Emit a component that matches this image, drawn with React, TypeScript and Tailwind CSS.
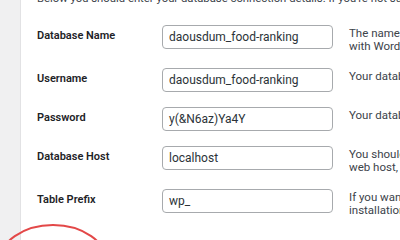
import React from "react";

const rows = [
  { label: "Database Name", value: "daousdum_food-ranking", desc: ["The name of the database you want to use", "with WordPress."] },
  { label: "Username", value: "daousdum_food-ranking", desc: ["Your database username."] },
  { label: "Password", value: "y(&N6az)Ya4Y", desc: ["Your database password."] },
  { label: "Database Host", value: "localhost", desc: ["You should be able to get this info from your", "web host, if localhost does not work."] },
  { label: "Table Prefix", value: "wp_", desc: ["If you want to run multiple WordPress", "installations in a single database, change this."] },
];

export default function App() {
  return (
    <div
      className="relative w-[400px] h-[240px] overflow-hidden bg-[#f0f0f1] flex font-['Roboto',sans-serif]"
    >
      <div className="w-[20px] shrink-0" />
      <div className="flex-1 bg-white border-l border-[#e2e2e4] pl-[16px] overflow-hidden">
        <p className="mt-[-10px] text-[11.3px] leading-[18px] text-[#3c434a] whitespace-nowrap">
          Below you should enter your database connection details. If you're not sure about these, contact your host.
        </p>
        <div className="mt-[17px] flex flex-col">
          {rows.map((r) => (
            <div key={r.label} className="flex items-start pb-[15px]">
              <div className="w-[125px] shrink-0 mt-[3px] text-[11px] leading-[16px] font-semibold text-[#1d2327] whitespace-nowrap">
                {r.label}
              </div>
              <div className="w-[171px] h-[24px] shrink-0 rounded-[4px] border border-[#a7aaad] flex items-center pl-[6px] text-[12px] text-[#2c3338] whitespace-nowrap overflow-hidden">
                {r.value}
              </div>
              <div className="ml-[16px] mt-[2px] text-[11.5px] leading-[13px] text-[#3c434a] whitespace-nowrap">
                {r.desc.map((d) => (
                  <div key={d}>{d}</div>
                ))}
              </div>
            </div>
          ))}
        </div>
      </div>
      <svg className="absolute left-0 top-0" width="400" height="240" viewBox="0 0 400 240">
        <ellipse cx="53" cy="263" rx="54" ry="38" fill="none" stroke="#e34848" strokeWidth="2" />
      </svg>
    </div>
  );
}
